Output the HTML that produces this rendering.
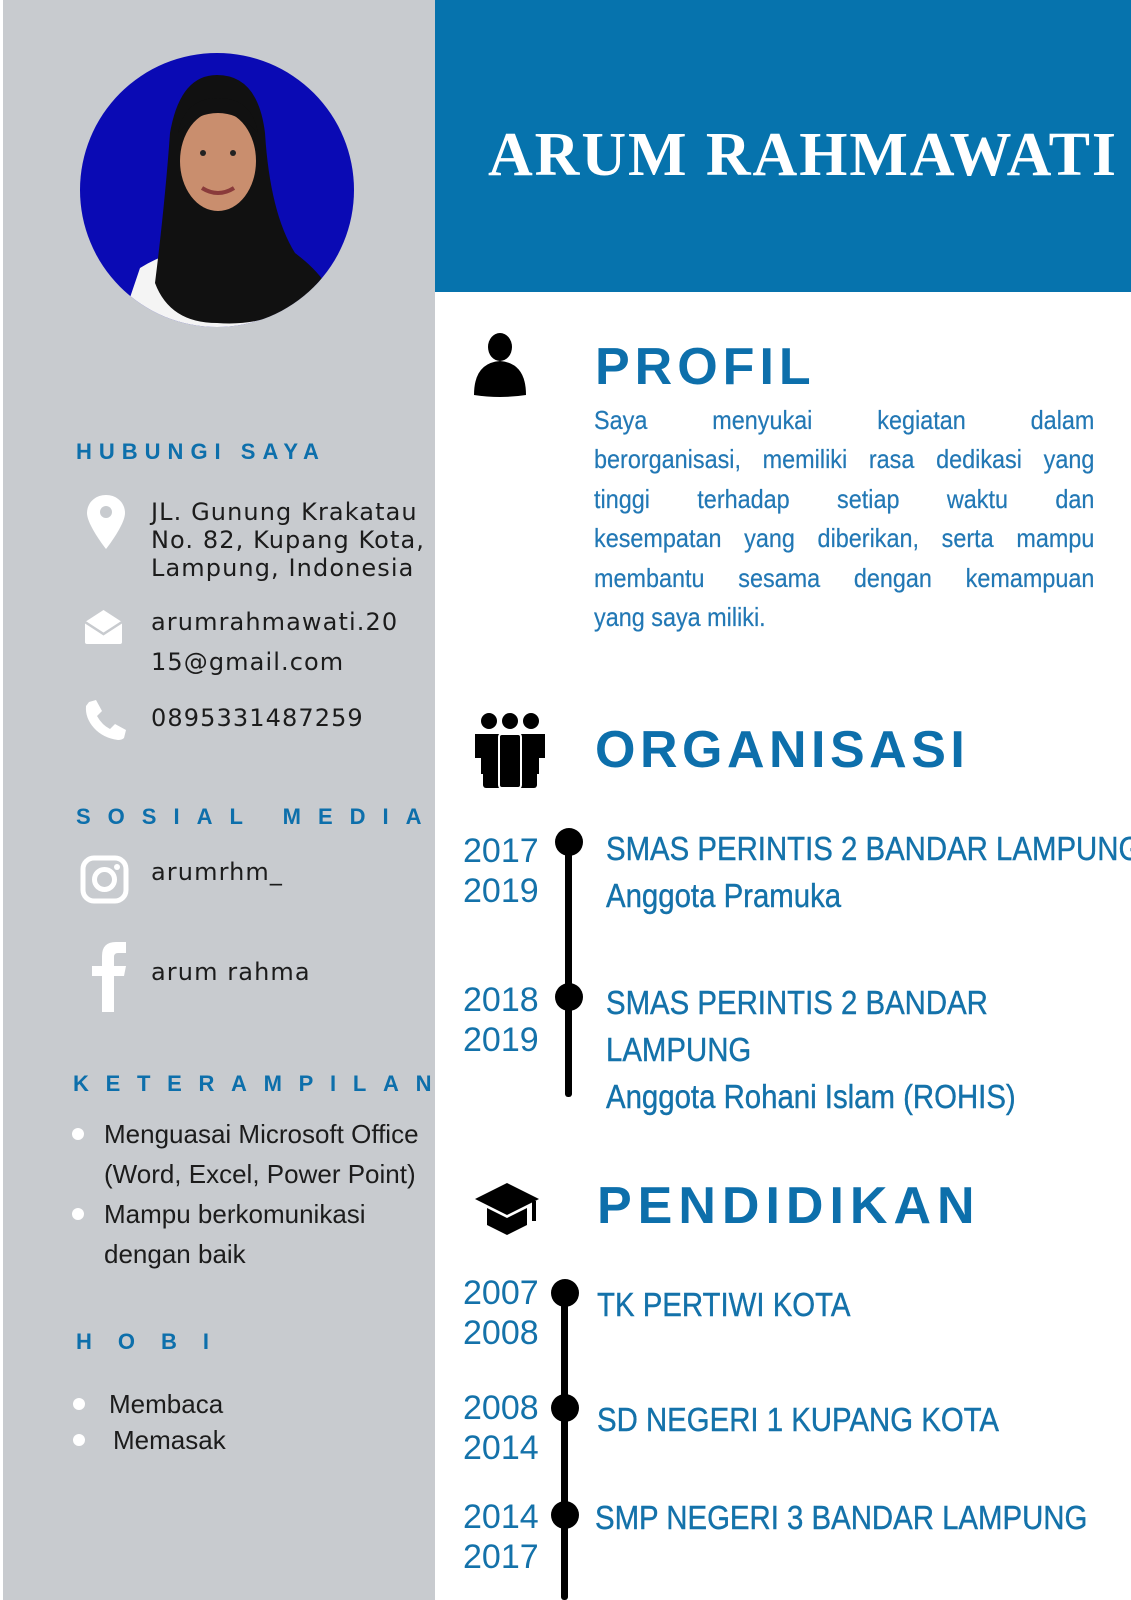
<!DOCTYPE html>
<html><head><meta charset="utf-8"><style>
*{margin:0;padding:0;box-sizing:border-box}
body{width:1131px;height:1600px;position:relative;overflow:hidden;background:#fff;font-family:"Liberation Sans",sans-serif}
.a{position:absolute;white-space:nowrap;line-height:1}
.side{position:absolute;left:3px;top:0;width:432px;height:1600px;background:#c8cbcf}
.hd{position:absolute;left:435px;top:0;width:696px;height:292px;background:#0673ad}
.lh{color:#0d6fab;font-weight:bold;font-size:22px}
.rh{color:#0d6fab;font-weight:bold;font-size:52px}
.ct{font-family:"DejaVu Sans",sans-serif;font-size:24px;color:#1c1c1c;letter-spacing:1.1px}
.yr{color:#1472aa;font-size:34px}
.en{color:#1472aa;font-size:33px;transform:scaleX(.89);transform-origin:0 0;-webkit-text-stroke:.4px #1472aa}
.p{position:absolute;left:594px;width:556px;font-size:26px;color:#2278b5;transform:scaleX(.9);transform-origin:0 0;text-align:justify;text-align-last:justify;white-space:nowrap;line-height:1;-webkit-text-stroke:.2px #2278b5}
.sk{font-size:26px;color:#1c1c1c;transform:scaleX(1.0);transform-origin:0 0}
.dot{position:absolute;width:12px;height:12px;border-radius:50%;background:#fff}
.tl{position:absolute;width:7px;background:#000;border-radius:3px}
.td{position:absolute;width:28px;height:28px;border-radius:50%;background:#000}
</style></head><body>
<div class="side"></div>
<div class="hd"></div>

<svg style="position:absolute;left:80px;top:53px" width="274" height="274" viewBox="0 0 274 274">
<defs><clipPath id="c"><circle cx="137" cy="137" r="137"/></clipPath></defs>
<g clip-path="url(#c)">
<rect width="274" height="274" fill="#0a0ab4"/>
<path d="M40 274 L60 215 Q100 190 137 200 Q180 190 230 215 L250 274Z" fill="#f4f4f4"/>
<path d="M75 230 Q85 150 90 80 Q100 22 137 22 Q178 22 185 80 Q190 160 215 200 Q235 215 245 230 Q200 275 137 270 Q90 270 75 230Z" fill="#111"/>
<ellipse cx="138" cy="108" rx="38" ry="50" fill="#c98e6e"/>
<path d="M98 80 Q105 45 138 45 Q172 45 178 80 Q160 60 138 60 Q115 60 98 80Z" fill="#111"/>
<path d="M122 135 Q138 145 154 135" stroke="#8a3b3b" stroke-width="4" fill="none"/>
<circle cx="123" cy="100" r="3" fill="#222"/><circle cx="153" cy="100" r="3" fill="#222"/>
</g></svg>

<div class="a" style="left:488px;top:124px;font-family:'Liberation Serif',serif;font-weight:bold;font-size:62px;color:#fff;letter-spacing:1.9px">ARUM RAHMAWATI</div>

<div class="a lh" style="left:76px;top:441px;letter-spacing:7px">HUBUNGI SAYA</div>
<svg style="position:absolute;left:87px;top:495px" width="38" height="54" viewBox="0 0 38 54"><path d="M19 0C8 0 0 8 0 18c0 12 19 36 19 36s19-24 19-36C38 8 30 0 19 0z" fill="#fff"/><circle cx="19" cy="17" r="6" fill="#c8cbcf"/></svg>
<div class="a ct" style="left:151px;top:500px">JL. Gunung Krakatau</div>
<div class="a ct" style="left:151px;top:528px">No. 82, Kupang Kota,</div>
<div class="a ct" style="left:151px;top:556px">Lampung, Indonesia</div>
<svg style="position:absolute;left:85px;top:610px" width="37" height="34" viewBox="0 0 37 34"><path d="M0 12 L18.5 0 L37 12 L37 32 Q37 34 35 34 L2 34 Q0 34 0 32Z" fill="#fff"/><path d="M0 12 L18.5 24 L37 12" stroke="#c8cbcf" stroke-width="2.5" fill="none"/></svg>
<div class="a ct" style="left:151px;top:610px">arumrahmawati.20</div>
<div class="a ct" style="left:151px;top:650px">15@gmail.com</div>
<svg style="position:absolute;left:85px;top:700px" width="41" height="40" viewBox="0 0 41 40"><path d="M4 2 L11 0 L17 11 L12 16 Q17 25 25 29 L30 24 L41 30 L39 38 Q37 40 33 40 Q18 38 9 28 Q0 18 1 6Z" fill="#fff"/></svg>
<div class="a ct" style="left:151px;top:706px">0895331487259</div>

<div class="a lh" style="left:76px;top:806px;letter-spacing:17px">SOSIAL MEDIA</div>
<svg style="position:absolute;left:80px;top:855px" width="49" height="49" viewBox="0 0 49 49"><rect x="3" y="3" width="43" height="43" rx="11" fill="none" stroke="#fff" stroke-width="5"/><circle cx="24.5" cy="24.5" r="10" fill="none" stroke="#fff" stroke-width="5"/><circle cx="37" cy="12" r="3" fill="#fff"/></svg>
<div class="a ct" style="left:151px;top:860px">arumrhm_</div>
<svg style="position:absolute;left:92px;top:942px" width="34" height="70" viewBox="0 0 34 70"><path d="M10 70 V34 H0 V24 H10 V14 Q10 0 24 0 H34 V11 H26 Q22 11 22 15 V24 H34 L32 34 H22 V70Z" fill="#fff"/></svg>
<div class="a ct" style="left:151px;top:960px">arum rahma</div>

<div class="a lh" style="left:73px;top:1073px;letter-spacing:16.7px">KETERAMPILAN</div>
<div class="dot" style="left:72px;top:1128px"></div>
<div class="dot" style="left:72px;top:1208px"></div>
<div class="a sk" style="left:104px;top:1121px">Menguasai Microsoft Office</div>
<div class="a sk" style="left:104px;top:1161px">(Word, Excel, Power Point)</div>
<div class="a sk" style="left:104px;top:1201px">Mampu berkomunikasi</div>
<div class="a sk" style="left:104px;top:1241px">dengan baik</div>

<div class="a lh" style="left:76px;top:1331px;letter-spacing:26px">HOBI</div>
<div class="dot" style="left:73px;top:1398px"></div>
<div class="dot" style="left:73px;top:1434px"></div>
<div class="a sk" style="left:109px;top:1391px">Membaca</div>
<div class="a sk" style="left:113px;top:1427px">Memasak</div>

<svg style="position:absolute;left:474px;top:333px" width="52" height="64" viewBox="0 0 52 64"><ellipse cx="26" cy="14" rx="12" ry="14" fill="#000"/><path d="M0 62 Q0 30 26 28 Q52 30 52 62 Q26 66 0 62Z" fill="#000"/></svg>
<div class="a rh" style="left:595px;top:341px;letter-spacing:5px">PROFIL</div>
<div class="p" style="top:407px">Saya menyukai kegiatan dalam</div>
<div class="p" style="top:446px">berorganisasi, memiliki rasa dedikasi yang</div>
<div class="p" style="top:486px">tinggi terhadap setiap waktu dan</div>
<div class="p" style="top:525px">kesempatan yang diberikan, serta mampu</div>
<div class="p" style="top:565px">membantu sesama dengan kemampuan</div>
<div class="p" style="top:604px;text-align-last:left">yang saya miliki.</div>

<svg style="position:absolute;left:475px;top:712px" width="70" height="76" viewBox="0 0 70 76"><circle cx="14" cy="9" r="8" fill="#000"/><circle cx="35" cy="9" r="8" fill="#000"/><circle cx="56" cy="9" r="8" fill="#000"/><path d="M0 22 H12 V62 H6 V46 H0Z M58 22 H70 V46 H64 V62 H58Z" fill="#000"/><rect x="8" y="22" width="18" height="54" rx="3" fill="#000"/><rect x="44" y="22" width="18" height="54" rx="3" fill="#000"/><rect x="24" y="22" width="22" height="54" rx="3" fill="#000" stroke="#fff" stroke-width="2"/></svg>
<div class="a rh" style="left:595px;top:724px;letter-spacing:4.5px">ORGANISASI</div>

<div class="tl" style="left:565px;top:842px;height:255px"></div>
<div class="td" style="left:555px;top:828px"></div>
<div class="td" style="left:555px;top:983px"></div>
<div class="a yr" style="left:463px;top:834px">2017</div>
<div class="a yr" style="left:463px;top:874px">2019</div>
<div class="a yr" style="left:463px;top:983px">2018</div>
<div class="a yr" style="left:463px;top:1023px">2019</div>
<div class="a en" style="left:606px;top:832px">SMAS PERINTIS 2 BANDAR LAMPUNG</div>
<div class="a en" style="left:606px;top:879px">Anggota Pramuka</div>
<div class="a en" style="left:606px;top:986px">SMAS PERINTIS 2 BANDAR</div>
<div class="a en" style="left:606px;top:1033px">LAMPUNG</div>
<div class="a en" style="left:606px;top:1080px">Anggota Rohani Islam (ROHIS)</div>

<svg style="position:absolute;left:475px;top:1183px" width="65" height="52" viewBox="0 0 65 52"><path d="M0 16 L32 0 L64 16 L32 32Z" fill="#000"/><path d="M12 25 L32 35 L52 25 V42 L32 52 L12 42Z" fill="#000"/><rect x="57" y="18" width="4" height="20" fill="#000"/></svg>
<div class="a rh" style="left:597px;top:1180px;letter-spacing:6px">PENDIDIKAN</div>

<div class="tl" style="left:561px;top:1290px;height:310px"></div>
<div class="td" style="left:551px;top:1279px"></div>
<div class="td" style="left:551px;top:1394px"></div>
<div class="td" style="left:551px;top:1501px"></div>
<div class="a yr" style="left:463px;top:1276px">2007</div>
<div class="a yr" style="left:463px;top:1316px">2008</div>
<div class="a yr" style="left:463px;top:1391px">2008</div>
<div class="a yr" style="left:463px;top:1431px">2014</div>
<div class="a yr" style="left:463px;top:1500px">2014</div>
<div class="a yr" style="left:463px;top:1540px">2017</div>
<div class="a en" style="left:597px;top:1288px">TK PERTIWI KOTA</div>
<div class="a en" style="left:597px;top:1403px">SD NEGERI 1 KUPANG KOTA</div>
<div class="a en" style="left:595px;top:1501px">SMP NEGERI 3 BANDAR LAMPUNG</div>
</body></html>
